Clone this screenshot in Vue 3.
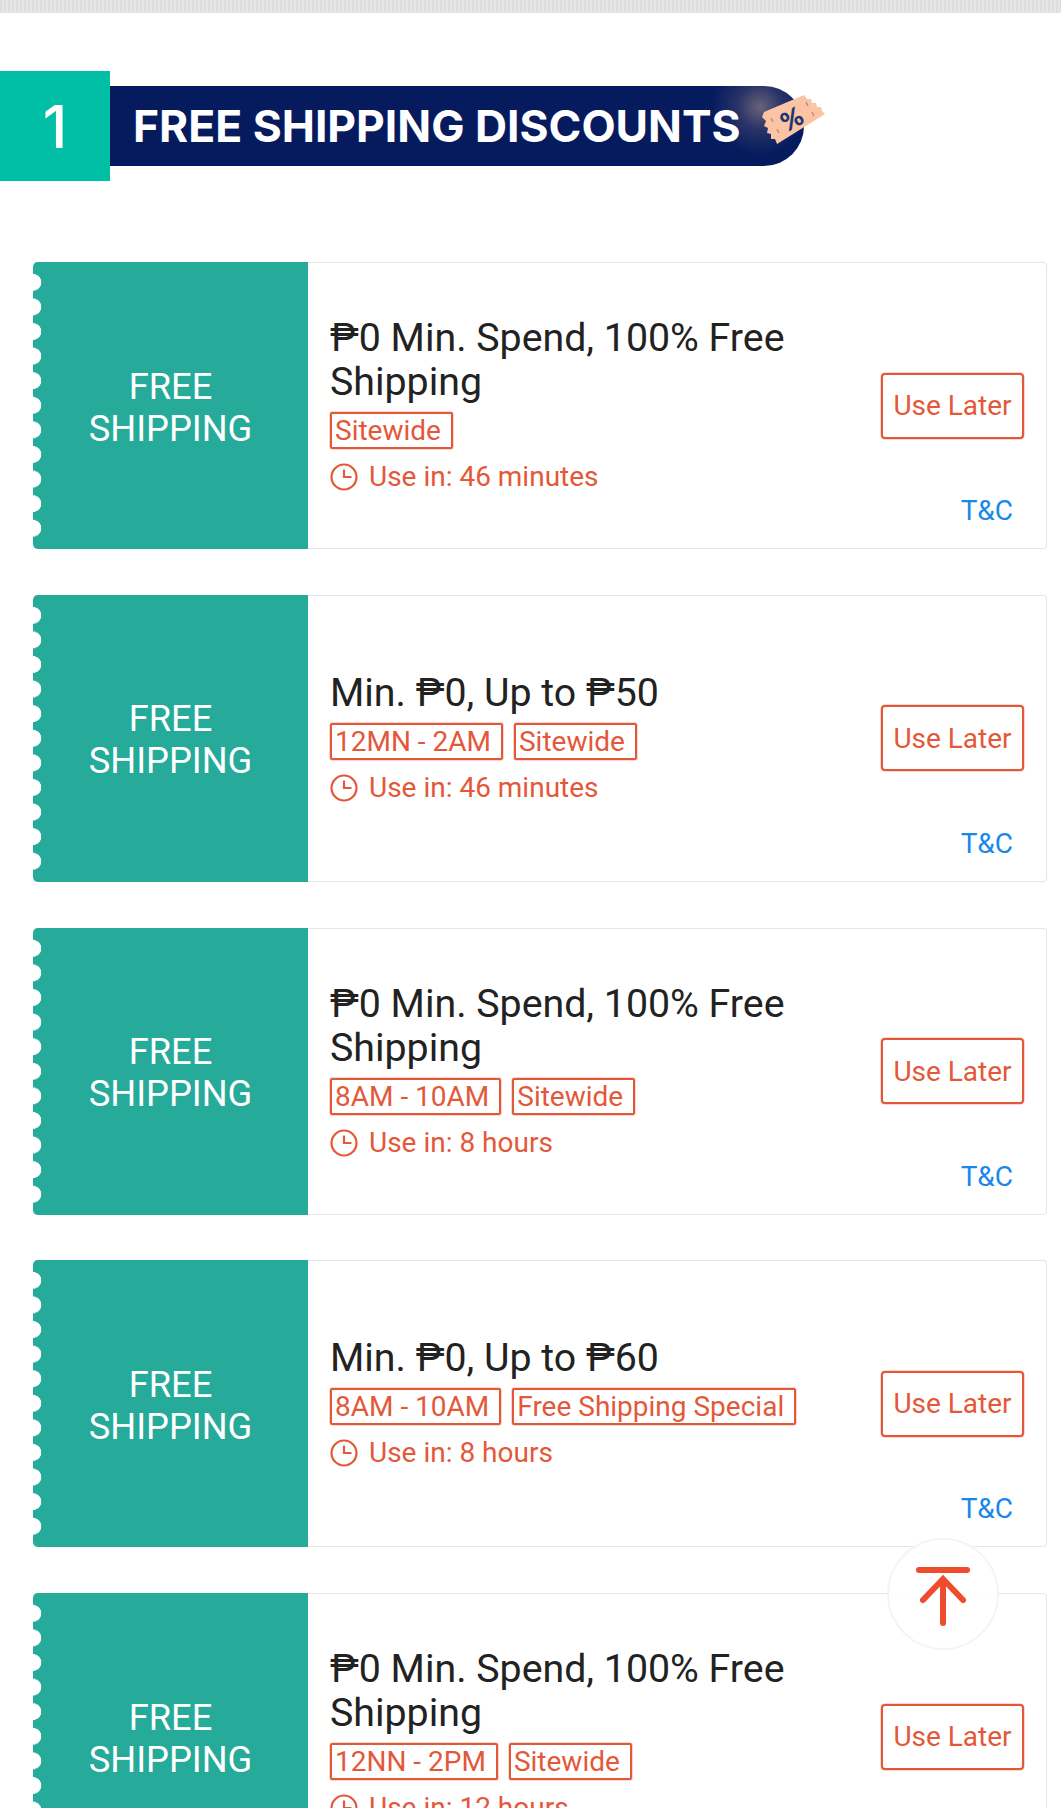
<script setup>
const vouchers = [
  { id: 1, title: "₱0 Min. Spend, 100% Free Shipping", tags: ["Sitewide"], use: "Use in: 46 minutes" },
  { id: 2, title: "Min. ₱0, Up to ₱50", tags: ["12MN - 2AM", "Sitewide"], use: "Use in: 46 minutes" },
  { id: 3, title: "₱0 Min. Spend, 100% Free Shipping", tags: ["8AM - 10AM", "Sitewide"], use: "Use in: 8 hours" },
  { id: 4, title: "Min. ₱0, Up to ₱60", tags: ["8AM - 10AM", "Free Shipping Special"], use: "Use in: 8 hours" },
  { id: 5, title: "₱0 Min. Spend, 100% Free Shipping", tags: ["12NN - 2PM", "Sitewide"], use: "Use in: 12 hours" },
];
</script>

<template>
  <main class="page">
    <div class="topbar"></div>

    <header class="banner">
      <div class="num">1</div>
      <div class="ribbon">
        <span class="ribbon-text">FREE SHIPPING DISCOUNTS</span>
        <svg class="ticket" width="70" height="64" viewBox="0 0 70 64">
          <polygon
            points="47,2 50,6 54,6 55,10 59,10 60,14 64,14 65,18 68,21 20,51 18,46 14,46 14,41 10,40 11,35 7,33 9,28 5,24 7,19"
            fill="#fbc4a4"
          />
          <g stroke="#c98a78" stroke-width="1.5">
            <line x1="14" y1="25" x2="16" y2="29" />
            <line x1="20" y1="36" x2="22" y2="40" />
            <line x1="49" y1="9" x2="51" y2="13" />
            <line x1="55" y1="19" x2="57" y2="23" />
          </g>
          <text x="36" y="35" class="pct" transform="rotate(-30 36 28)" text-anchor="middle">%</text>
        </svg>
      </div>
    </header>

    <section class="list">
      <article v-for="v in vouchers" :key="v.id" class="card">
        <div class="stub">
          <div class="scallops"></div>
          <span>FREE<br />SHIPPING</span>
        </div>
        <div class="info">
          <div class="title">{{ v.title }}</div>
          <div class="tags">
            <span v-for="t in v.tags" :key="t" class="tag">{{ t }}</span>
          </div>
          <div class="use">
            <svg width="28" height="28" viewBox="0 0 28 28" fill="none" stroke="#e4583a" stroke-width="2.2">
              <circle cx="14" cy="14" r="12.5" />
              <path d="M14 6.5V14H21.5" />
            </svg>
            <span>{{ v.use }}</span>
          </div>
        </div>
        <div class="actions">
          <button class="later">Use Later</button>
          <a class="tc">T&amp;C</a>
        </div>
      </article>
    </section>

    <div class="to-top">
      <svg width="60" height="60" viewBox="0 0 60 60" fill="none" stroke="#ee4d2d" stroke-width="6" stroke-linecap="round">
        <path d="M6 3H54" />
        <path d="M30 14V56" />
        <path d="M10 33L30 12L50 33" />
      </svg>
    </div>
  </main>
</template>

<style>
html,
body {
  overflow: hidden;
  background: #fff;
}
</style>

<style scoped>
.page {
  position: relative;
  width: 1061px;
  height: 1808px;
  overflow: hidden;
  background: #fff;
  font-family: Roboto, "Liberation Sans", sans-serif;
}

.topbar {
  height: 13px;
  background: repeating-linear-gradient(90deg, #dedede 0 2px, #e6e6e6 2px 4px);
}

.banner {
  display: flex;
  align-items: center;
  margin-top: 58px;
  height: 110px;
}

.num {
  width: 110px;
  height: 110px;
  display: flex;
  align-items: center;
  justify-content: center;
  background: #00bfa5;
  color: #fff;
  font-family: Inter, sans-serif;
  font-weight: 500;
  font-size: 59px;
}

.ribbon {
  position: relative;
  width: 694px;
  height: 80px;
  display: flex;
  align-items: center;
  padding-left: 23px;
  box-sizing: border-box;
  border-radius: 0 40px 40px 0;
  background: radial-gradient(circle at 650px 21px, #6a6378 0, #2a3468 22px, transparent 48px), #051b5e;
}

.ribbon-text {
  color: #fff;
  font-family: Inter, sans-serif;
  font-weight: 700;
  font-size: 44.4px;
  white-space: nowrap;
}

.ticket {
  position: absolute;
  left: 647px;
  top: 7px;
}

.pct {
  fill: #1f3570;
  font-family: Lato, sans-serif;
  font-weight: 900;
  font-size: 26px;
}

.list {
  display: flex;
  flex-direction: column;
  gap: 45.8px;
  margin: 81px 14px 0 33px;
}

.card {
  flex: none;
  height: 287px;
  display: flex;
  box-sizing: border-box;
  border: 1px solid #e6e6e6;
  border-left: 0;
  border-radius: 4px;
}

.stub {
  position: relative;
  flex: none;
  width: 275px;
  height: 287px;
  margin-top: -1px;
  padding-top: 4px;
  box-sizing: border-box;
  display: flex;
  align-items: center;
  justify-content: center;
  text-align: center;
  background: #26aa99;
  border-radius: 5px 0 0 5px;
  color: #fff;
  font-size: 36.3px;
  line-height: 42px;
}

.scallops {
  position: absolute;
  left: 0;
  top: 8px;
  width: 9px;
  height: 271px;
  background: radial-gradient(circle at 0 50%, #fff 8px, transparent 8.6px) 0 0 / 9px 24.6px repeat-y;
}

.info {
  flex: 1;
  min-width: 0;
  display: flex;
  flex-direction: column;
  justify-content: center;
  padding-left: 22px;
}

.title {
  color: #222;
  font-size: 39.3px;
  line-height: 44px;
  width: 480px;
}

.tags {
  display: flex;
  gap: 11px;
  margin-top: 8px;
}

.tag {
  height: 37px;
  box-sizing: border-box;
  padding: 0 10px 0 3px;
  border: 2px solid #e4583a;
  border-radius: 2px;
  box-shadow: 0 0 0 0.5px rgba(228, 88, 58, 0.5);
  color: #e4583a;
  font-size: 28px;
  line-height: 34px;
  white-space: nowrap;
}

.use {
  display: flex;
  align-items: center;
  gap: 11px;
  margin-top: 10px;
  color: #e4583a;
  font-size: 28px;
  line-height: 36px;
}

.actions {
  flex: none;
  width: 166px;
  display: grid;
  grid-template-rows: 1fr auto 1fr;
}

.later {
  grid-row: 2;
  justify-self: end;
  margin-right: 22px;
  width: 143px;
  height: 66px;
  padding: 0;
  background: #fff;
  border: 2px solid #e4583a;
  border-radius: 4px;
  box-shadow: 0 0 0 0.5px rgba(228, 88, 58, 0.5);
  color: #e4583a;
  font-family: inherit;
  font-size: 28px;
}

.tc {
  grid-row: 3;
  align-self: end;
  justify-self: end;
  margin: 0 33px 21px 0;
  color: #1a88e8;
  font-size: 28px;
  line-height: 32px;
}

.to-top {
  position: absolute;
  left: 887px;
  top: 1538px;
  width: 112px;
  height: 112px;
  padding-top: 6px;
  box-sizing: border-box;
  display: flex;
  align-items: center;
  justify-content: center;
  border: 2px solid #f4f4f4;
  border-radius: 50%;
  background: rgba(255, 255, 255, 0.9);
}
</style>
